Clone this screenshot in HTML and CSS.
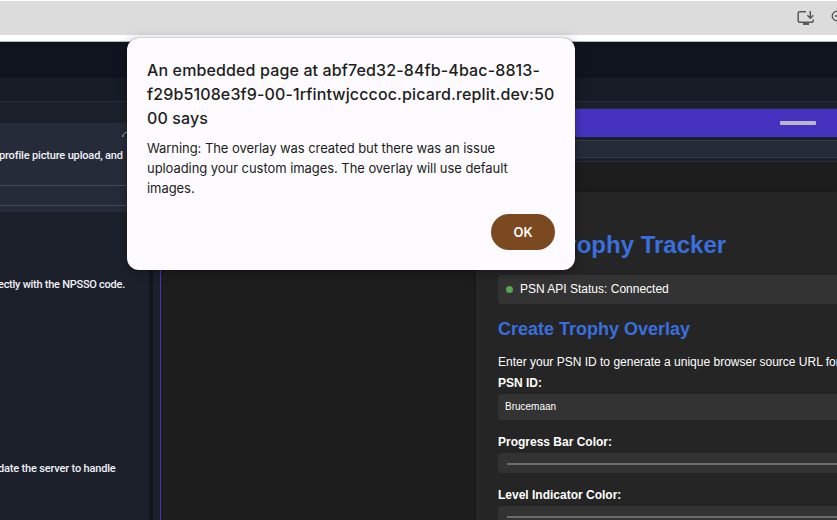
FILE: index.html
```html
<!DOCTYPE html>
<html lang="en">
<head>
<meta charset="utf-8">
<title>Trophy Tracker</title>
<link rel="stylesheet" href="styles.css">
</head>
<body>
<header class="toolbar">
  <svg class="install" viewBox="0 0 18 16" width="18" height="16" fill="none" stroke="#58595c" stroke-width="1.5"><path d="M9 1.7H2.5Q1.2 1.7 1.2 3V11Q1.2 12.2 2.5 12.2H15Q16.2 12.2 16.2 11V9.5M13.3 1V8M10.3 5.2 13.3 8.2 16.3 5.2"/><path d="M6 13.8H12" stroke-width="2.4"/></svg>
  <svg class="lens" viewBox="0 0 14 16" width="14" height="16" fill="none" stroke="#58595c" stroke-width="1.5"><circle cx="6" cy="6" r="4.7"/><path d="M4 6H8M9.5 9.5 13 13"/></svg>
</header>
<div class="white-bar"></div>
<div class="app-header"></div>
<div class="app-tabs"></div>
<main class="workspace">
  <aside class="chat">
    <div class="prompt">
      <svg class="loop" viewBox="0 0 12 12" width="12" height="12" fill="none" stroke="#c5c8d0"><path d="M.7 6A5 5 0 0 1 7 1.2" stroke-dasharray="3 .8"/></svg>
      <p class="line upload">profile picture upload, and</p>
      <div class="strip"></div>
    </div>
    <p class="line code">ectly with the NPSSO code.</p>
    <p class="line server">date the server to handle</p>
  </aside>
  <div class="gutter"></div>
  <section class="webview">
    <div class="banner"><span class="dash"></span></div>
    <div class="address"></div>
    <div class="page">
      <div class="card">
        <h1>PSN Trophy Tracker</h1>
        <div class="status"><i class="dot"></i><span class="status-text">PSN API Status: Connected</span></div>
        <h2>Create Trophy Overlay</h2>
        <p class="intro">Enter your PSN ID to generate a unique browser source URL for</p>
        <div class="label psn">PSN ID:</div>
        <div class="input">Brucemaan</div>
        <div class="label">Progress Bar Color:</div>
        <div class="color"><span></span></div>
        <div class="label">Level Indicator Color:</div>
        <div class="color"><span></span></div>
      </div>
    </div>
  </section>
</main>
<div class="dialog" role="alertdialog">
  <div class="title">An embedded page at abf7ed32-84fb-4bac-8813-<br>f29b5108e3f9-00-1rfintwjcccoc.picard.replit.dev:50<br>00 says</div>
  <div class="message">Warning: The overlay was created but there was an issue<br>uploading your custom images. The overlay will use default<br>images.</div>
  <button class="ok">OK</button>
</div>
</body>
</html>
```

FILE: styles.css
```css
* { box-sizing: border-box; }
body {
  margin: 0;
  width: 837px;
  height: 520px;
  overflow: hidden;
  position: relative;
  display: flex;
  flex-direction: column;
  background: #1c202b;
  font-family: "Liberation Sans", Arial, sans-serif;
}
p, h1, h2 { margin: 0; }
.toolbar {
  flex: none;
  height: 35px;
  border-top: 1px solid #fff;
  background: #dcdcdc;
  display: flex;
  padding: 9px 0 0 797px;
  gap: 16px;
  overflow: hidden;
}
.toolbar svg { flex: none; }
.white-bar { flex: none; height: 7px; background: #fff; border-bottom: 1px solid #b6b7bb; }
.app-header { flex: none; height: 36px; background: #10141f; }
.app-tabs { flex: none; height: 24px; background: #171b26; border-bottom: 1px solid #262a36; }
.workspace { flex: 1; min-height: 0; display: flex; }
.chat { flex: none; width: 149px; padding-top: 21px; overflow: hidden; background: #1c202b; }
.prompt { position: relative; height: 89px; background: #262b3a; padding-top: 25px; }
.loop { position: absolute; left: 122px; top: 8px; }
.line {
  font: 500 11px/16px Roboto, sans-serif;
  color: #f0f2f6;
  white-space: nowrap;
}
.upload { margin-left: -1px; letter-spacing: -.16px; }
.strip { margin-top: 21px; height: 21px; border-top: 1px solid #434856; border-bottom: 1px solid #434856; }
.code { margin: 65px 0 0 -2px; letter-spacing: -.26px; }
.server { margin: 168px 0 0 -2px; letter-spacing: -.17px; }
.gutter { flex: none; width: 4px; background: #11151f; }
.webview { flex: 1; min-width: 0; padding-top: 6px; }
.banner {
  height: 29px;
  margin-left: 7px;
  background: #4533c0;
  border-top: 1px solid #2a2c43;
  padding: 12px 0 0 620px;
}
.dash { display: block; width: 36px; height: 4px; border-radius: 1px; background: #b9b8cb; }
.address { height: 18px; margin-top: 3px; background: #262b3a; border: solid #353a49; border-width: 1px 0; }
.page {
  height: 362px;
  margin: 3px 0 0 7px;
  padding: 30px 0 0 315px;
  background: #1d1d1d;
  border-left: 1px solid #4730c4;
  border-top: 1px solid #292d3a;
  overflow: hidden;
}
.card {
  height: 400px;
  padding: 36px 0 0 22px;
  background: #252525;
  box-shadow: 0 0 6px rgba(0, 0, 0, .25);
  color: #fff;
  white-space: nowrap;
}
h1 { font-size: 24px; line-height: 34px; color: #396fdf; }
.status {
  height: 29px;
  margin-top: 13px;
  padding-left: 8px;
  display: flex;
  align-items: center;
  gap: 7px;
  border-radius: 4px 0 0 4px;
  background: #333;
  font-size: 12px;
}
.status-text { padding-bottom: 2px; }
.dot { width: 7px; height: 7px; border-radius: 50%; background: #56a64d; }
h2 { margin-top: 13px; font-size: 18px; line-height: 24px; color: #396fdf; }
.intro { margin-top: 13px; font-size: 12px; line-height: 16px; }
.label { margin-top: 13px; font-size: 12px; font-weight: 700; line-height: 18px; }
.label.psn { margin-top: 4px; }
.input {
  height: 26px;
  margin-top: 2px;
  padding-left: 7px;
  border-radius: 4px 0 0 4px;
  background: #333;
  font-size: 10px;
  line-height: 26px;
}
.color { height: 20px; margin-top: 2px; padding: 10px 0 0 9px; border-radius: 4px 0 0 4px; background: #333; }
.color span { display: block; height: 2px; background: #6d6d6d; }
.dialog {
  position: absolute;
  left: 127px;
  top: 38px;
  width: 448px;
  height: 232px;
  padding: 20px;
  border-radius: 12px;
  background: #fdfbff;
  box-shadow: 0 0 1px rgba(0, 0, 0, .7), 0 2px 12px rgba(0, 0, 0, .3);
  display: flex;
  flex-direction: column;
  font-family: Inter, sans-serif;
  color: #211d1a;
  white-space: nowrap;
}
.title { font-size: 16px; font-weight: 500; line-height: 24px; letter-spacing: .13px; }
.message { margin-top: 8px; font-size: 13px; line-height: 20px; letter-spacing: -.06px; }
.ok {
  align-self: flex-end;
  width: 64px;
  height: 36px;
  margin-top: 16px;
  padding: 0;
  border: 0;
  border-radius: 18px;
  background: #7b4920;
  color: #fff;
  font: 600 13px Inter, sans-serif;
}
```
